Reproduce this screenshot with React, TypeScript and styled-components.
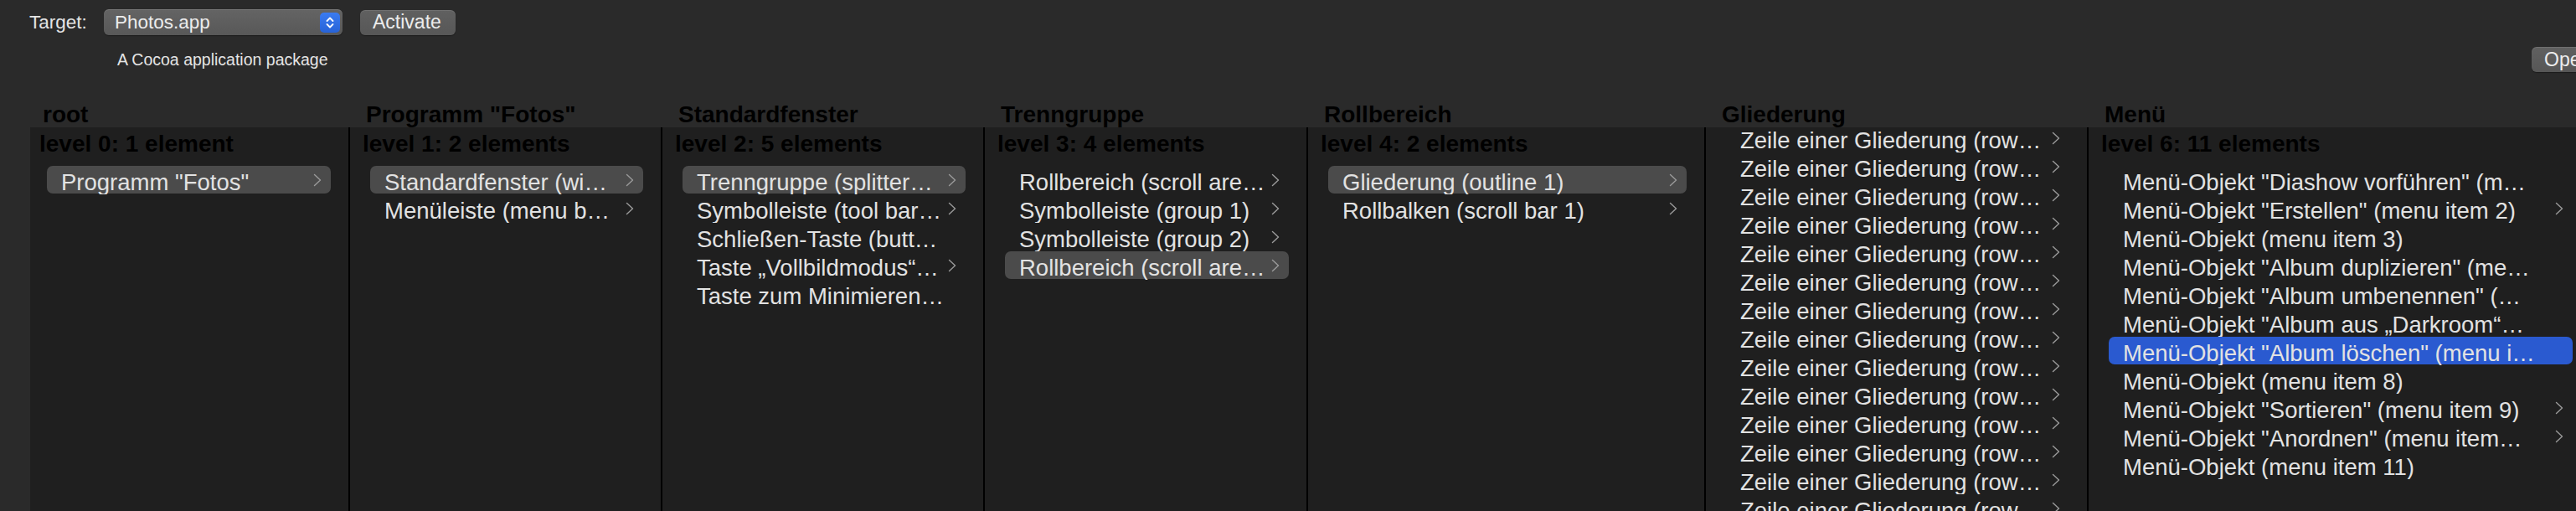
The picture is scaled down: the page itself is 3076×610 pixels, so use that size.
import React from "react";
import styled, { createGlobalStyle } from "styled-components";

const GlobalStyle = createGlobalStyle`
  html, body {
    margin: 0;
    padding: 0;
    background: #2a2a2a;
    overflow: hidden;
  }
  body {
    font-family: "Liberation Sans", Arial, sans-serif;
    -webkit-font-smoothing: antialiased;
  }
`;

const Window = styled.div`
  width: 3093px;
  height: 610px;
  background: #2a2a2a;
  display: flex;
  flex-direction: column;
  overflow: hidden;
`;

const Toolbar = styled.div`
  display: flex;
  align-items: center;
  height: 31px;
  margin-top: 11px;
  padding-left: 35px;
`;

const TargetLabel = styled.span`
  width: 89px;
  flex: none;
  font-size: 22.5px;
  color: #e4e4e4;
`;

const Popup = styled.div`
  width: 285px;
  height: 31px;
  box-sizing: border-box;
  border-radius: 6px;
  background: linear-gradient(#646464, #585858);
  box-shadow: 0 1px 1px rgba(0, 0, 0, 0.35), inset 0 1px 0 rgba(255, 255, 255, 0.12);
  display: flex;
  align-items: center;
  justify-content: space-between;
  padding: 0 3px 0 13px;
  margin-right: 21px;
`;

const PopupText = styled.span`
  font-size: 22.5px;
  color: #ececec;
`;

const Stepper = styled.div`
  width: 24px;
  height: 24px;
  border-radius: 5px;
  background: linear-gradient(#3a7bf0, #2763d8);
  display: flex;
  align-items: center;
  justify-content: center;
`;

const PushButton = styled.div<{ $width: number }>`
  height: 30px;
  box-sizing: border-box;
  width: ${(p) => p.$width}px;
  padding: 0 15px;
  border-radius: 6px;
  background: linear-gradient(#606060, #575757);
  box-shadow: 0 1px 1px rgba(0, 0, 0, 0.35), inset 0 1px 0 rgba(255, 255, 255, 0.1);
  display: flex;
  align-items: center;
  font-size: 23px;
  color: #ececec;
  white-space: nowrap;
  overflow: hidden;
`;

const SubRow = styled.div`
  display: flex;
  align-items: center;
  justify-content: space-between;
  height: 30px;
  margin-top: 14px;
  padding-left: 140px;
`;

const Subtitle = styled.span`
  font-size: 19.5px;
  color: #e4e4e4;
`;

const Browser = styled.div`
  display: flex;
  margin-top: 32px;
  padding-left: 30px;
  flex: 1;
  min-height: 0;
`;

const Column = styled.div<{ $width: number }>`
  width: ${(p) => p.$width}px;
  flex: none;
  display: flex;
  flex-direction: column;
  min-height: 0;
`;

const ColumnTitle = styled.div`
  height: 34px;
  box-sizing: border-box;
  padding: 2px 0 0 21px;
  line-height: 34px;
  font-size: 28px;
  font-weight: bold;
  color: #000;
  overflow: hidden;
  white-space: nowrap;
`;

const Panel = styled.div<{ $edge: number; $first?: boolean }>`
  flex: 1;
  min-height: 0;
  background: #1f1f1f;
  border-left: ${(p) => p.$edge}px solid ${(p) => (p.$first ? "#2a2a2a" : "#000")};
  overflow: hidden;
`;

const LevelLabel = styled.div<{ $edge: number }>`
  height: 46px;
  box-sizing: border-box;
  padding: 3px 0 0 ${(p) => 17 - p.$edge}px;
  line-height: 34px;
  font-size: 28px;
  font-weight: bold;
  color: #000;
  white-space: nowrap;
`;

const List = styled.div<{ $edge: number; $offset: number }>`
  display: flex;
  flex-direction: column;
  gap: 1px;
  margin-top: ${(p) => p.$offset}px;
  padding: 0 21px 0 ${(p) => 26 - p.$edge}px;
`;

const Row = styled.div<{ $sel?: "gray" | "blue" }>`
  height: 33px;
  box-sizing: border-box;
  padding: 5px 11px 0 17px;
  border-radius: 7px;
  background: ${(p) => (p.$sel === "gray" ? "#4b4b4b" : p.$sel === "blue" ? "#2a5ad0" : "transparent")};
  display: flex;
  align-items: flex-start;
  gap: 2px;
`;

const RowText = styled.span`
  flex: 1;
  min-width: 0;
  line-height: 29px;
  font-size: 27.5px;
  color: #e2e2e2;
  white-space: nowrap;
  overflow: hidden;
  text-overflow: ellipsis;
`;

const Chevron = styled.svg`
  flex: none;
  width: 10px;
  height: 16px;
  margin-top: 4px;
`;

type RowData = { t: string; c?: boolean; sel?: "gray" | "blue" };
type ColData = {
  title: string;
  label?: string;
  width: number;
  rows: RowData[];
  offset?: number;
};

const zeile: RowData[] = Array.from({ length: 16 }, () => ({
  t: "Zeile einer Gliederung (row…",
  c: true,
}));

const columns: ColData[] = [
  {
    title: "root",
    label: "level 0: 1 element",
    width: 386,
    rows: [{ t: 'Programm "Fotos"', c: true, sel: "gray" }],
  },
  {
    title: 'Programm "Fotos"',
    label: "level 1: 2 elements",
    width: 373,
    rows: [
      { t: "Standardfenster (wi…", c: true, sel: "gray" },
      { t: "Menüleiste (menu b…", c: true },
    ],
  },
  {
    title: "Standardfenster",
    label: "level 2: 5 elements",
    width: 385,
    rows: [
      { t: "Trenngruppe (splitter…", c: true, sel: "gray" },
      { t: "Symbolleiste (tool bar…", c: true },
      { t: "Schließen-Taste (butt…" },
      { t: "Taste „Vollbildmodus“…", c: true },
      { t: "Taste zum Minimieren…" },
    ],
  },
  {
    title: "Trenngruppe",
    label: "level 3: 4 elements",
    width: 386,
    rows: [
      { t: "Rollbereich (scroll are…", c: true },
      { t: "Symbolleiste (group 1)", c: true },
      { t: "Symbolleiste (group 2)", c: true },
      { t: "Rollbereich (scroll are…", c: true, sel: "gray" },
    ],
  },
  {
    title: "Rollbereich",
    label: "level 4: 2 elements",
    width: 475,
    rows: [
      { t: "Gliederung (outline 1)", c: true, sel: "gray" },
      { t: "Rollbalken (scroll bar 1)", c: true },
    ],
  },
  {
    title: "Gliederung",
    width: 457,
    offset: -4,
    rows: zeile,
  },
  {
    title: "Menü",
    label: "level 6: 11 elements",
    width: 601,
    rows: [
      { t: 'Menü-Objekt "Diashow vorführen" (m…' },
      { t: 'Menü-Objekt "Erstellen" (menu item 2)', c: true },
      { t: "Menü-Objekt (menu item 3)" },
      { t: 'Menü-Objekt "Album duplizieren" (me…' },
      { t: 'Menü-Objekt "Album umbenennen" (…' },
      { t: 'Menü-Objekt "Album aus „Darkroom“…' },
      { t: 'Menü-Objekt "Album löschen" (menu i…', sel: "blue" },
      { t: "Menü-Objekt (menu item 8)" },
      { t: 'Menü-Objekt "Sortieren" (menu item 9)', c: true },
      { t: 'Menü-Objekt "Anordnen" (menu item…', c: true },
      { t: "Menü-Objekt (menu item 11)" },
    ],
  },
];

function ChevronIcon() {
  return (
    <Chevron viewBox="0 0 10 16">
      <polyline
        points="1.5,1.5 8.5,8 1.5,14.5"
        fill="none"
        stroke="#9a9a9a"
        strokeWidth="1.4"
        strokeLinecap="round"
        strokeLinejoin="round"
      />
    </Chevron>
  );
}

function BrowserColumn({ col, first }: { col: ColData; first: boolean }) {
  const edge = first ? 6 : 2;
  return (
    <Column $width={col.width}>
      <ColumnTitle>{col.title}</ColumnTitle>
      <Panel $edge={edge} $first={first}>
        {col.label && <LevelLabel $edge={edge}>{col.label}</LevelLabel>}
        <List $edge={edge} $offset={col.offset ?? 0}>
          {col.rows.map((r, i) => (
            <Row key={i} $sel={r.sel}>
              <RowText>{r.t}</RowText>
              {r.c && <ChevronIcon />}
            </Row>
          ))}
        </List>
      </Panel>
    </Column>
  );
}

export default function App() {
  return (
    <>
      <GlobalStyle />
      <Window>
        <Toolbar>
          <TargetLabel>Target:</TargetLabel>
          <Popup>
            <PopupText>Photos.app</PopupText>
            <Stepper>
              <svg width="16" height="18" viewBox="0 0 16 18">
                <polyline points="4.5,7 8,3.5 11.5,7" fill="none" stroke="#fff" strokeWidth="1.8" strokeLinecap="round" strokeLinejoin="round" />
                <polyline points="4.5,11 8,14.5 11.5,11" fill="none" stroke="#fff" strokeWidth="1.8" strokeLinecap="round" strokeLinejoin="round" />
              </svg>
            </Stepper>
          </Popup>
          <PushButton $width={114}>Activate</PushButton>
        </Toolbar>
        <SubRow>
          <Subtitle>A Cocoa application package</Subtitle>
          <PushButton $width={70}>Open…</PushButton>
        </SubRow>
        <Browser>
          {columns.map((c, i) => (
            <BrowserColumn key={i} col={c} first={i === 0} />
          ))}
        </Browser>
      </Window>
    </>
  );
}
